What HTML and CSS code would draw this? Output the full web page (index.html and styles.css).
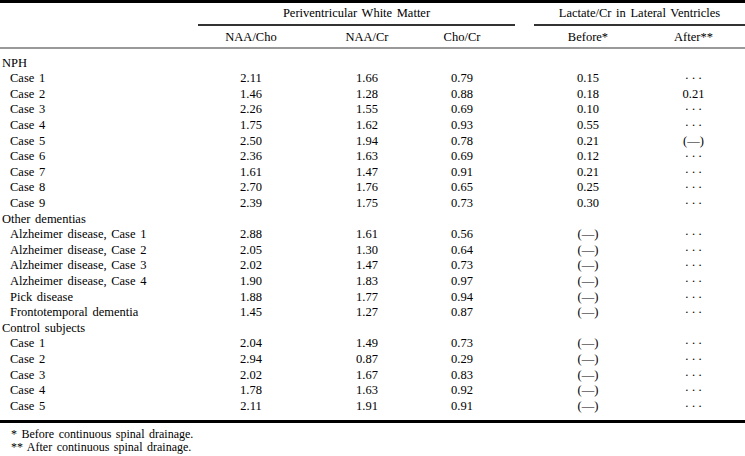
FILE: index.html
```html
<!DOCTYPE html>
<html>
<head>
<meta charset="utf-8">
<link rel="stylesheet" href="styles.css">
</head>
<body>
<div class="table">
  <div class="row group-head">
    <div class="c1"></div>
    <div class="grp grp-pv"><span class="grp-label">Periventricular White Matter</span></div>
    <div class="grp grp-lac"><span class="grp-label">Lactate/Cr in Lateral Ventricles</span></div>
  </div>
  <div class="row col-head">
    <div class="c1"></div>
    <div class="v c2">NAA/Cho</div>
    <div class="v c3">NAA/Cr</div>
    <div class="v c4">Cho/Cr</div>
    <div class="v c6">Before*</div>
    <div class="v c7">After**</div>
  </div>
  <div class="body">
    <div class="row"><div class="c1 sec">NPH</div></div>
    <div class="row"><div class="c1 sub">Case 1</div><div class="v c2">2.11</div><div class="v c3">1.66</div><div class="v c4">0.79</div><div class="v c6">0.15</div><div class="v c7 dots">···</div></div>
    <div class="row"><div class="c1 sub">Case 2</div><div class="v c2">1.46</div><div class="v c3">1.28</div><div class="v c4">0.88</div><div class="v c6">0.18</div><div class="v c7">0.21</div></div>
    <div class="row"><div class="c1 sub">Case 3</div><div class="v c2">2.26</div><div class="v c3">1.55</div><div class="v c4">0.69</div><div class="v c6">0.10</div><div class="v c7 dots">···</div></div>
    <div class="row"><div class="c1 sub">Case 4</div><div class="v c2">1.75</div><div class="v c3">1.62</div><div class="v c4">0.93</div><div class="v c6">0.55</div><div class="v c7 dots">···</div></div>
    <div class="row"><div class="c1 sub">Case 5</div><div class="v c2">2.50</div><div class="v c3">1.94</div><div class="v c4">0.78</div><div class="v c6">0.21</div><div class="v c7">(—)</div></div>
    <div class="row"><div class="c1 sub">Case 6</div><div class="v c2">2.36</div><div class="v c3">1.63</div><div class="v c4">0.69</div><div class="v c6">0.12</div><div class="v c7 dots">···</div></div>
    <div class="row"><div class="c1 sub">Case 7</div><div class="v c2">1.61</div><div class="v c3">1.47</div><div class="v c4">0.91</div><div class="v c6">0.21</div><div class="v c7 dots">···</div></div>
    <div class="row"><div class="c1 sub">Case 8</div><div class="v c2">2.70</div><div class="v c3">1.76</div><div class="v c4">0.65</div><div class="v c6">0.25</div><div class="v c7 dots">···</div></div>
    <div class="row"><div class="c1 sub">Case 9</div><div class="v c2">2.39</div><div class="v c3">1.75</div><div class="v c4">0.73</div><div class="v c6">0.30</div><div class="v c7 dots">···</div></div>
    <div class="row"><div class="c1 sec">Other dementias</div></div>
    <div class="row"><div class="c1 sub">Alzheimer disease, Case 1</div><div class="v c2">2.88</div><div class="v c3">1.61</div><div class="v c4">0.56</div><div class="v c6">(—)</div><div class="v c7 dots">···</div></div>
    <div class="row"><div class="c1 sub">Alzheimer disease, Case 2</div><div class="v c2">2.05</div><div class="v c3">1.30</div><div class="v c4">0.64</div><div class="v c6">(—)</div><div class="v c7 dots">···</div></div>
    <div class="row"><div class="c1 sub">Alzheimer disease, Case 3</div><div class="v c2">2.02</div><div class="v c3">1.47</div><div class="v c4">0.73</div><div class="v c6">(—)</div><div class="v c7 dots">···</div></div>
    <div class="row"><div class="c1 sub">Alzheimer disease, Case 4</div><div class="v c2">1.90</div><div class="v c3">1.83</div><div class="v c4">0.97</div><div class="v c6">(—)</div><div class="v c7 dots">···</div></div>
    <div class="row"><div class="c1 sub">Pick disease</div><div class="v c2">1.88</div><div class="v c3">1.77</div><div class="v c4">0.94</div><div class="v c6">(—)</div><div class="v c7 dots">···</div></div>
    <div class="row"><div class="c1 sub">Frontotemporal dementia</div><div class="v c2">1.45</div><div class="v c3">1.27</div><div class="v c4">0.87</div><div class="v c6">(—)</div><div class="v c7 dots">···</div></div>
    <div class="row"><div class="c1 sec">Control subjects</div></div>
    <div class="row"><div class="c1 sub">Case 1</div><div class="v c2">2.04</div><div class="v c3">1.49</div><div class="v c4">0.73</div><div class="v c6">(—)</div><div class="v c7 dots">···</div></div>
    <div class="row"><div class="c1 sub">Case 2</div><div class="v c2">2.94</div><div class="v c3">0.87</div><div class="v c4">0.29</div><div class="v c6">(—)</div><div class="v c7 dots">···</div></div>
    <div class="row"><div class="c1 sub">Case 3</div><div class="v c2">2.02</div><div class="v c3">1.67</div><div class="v c4">0.83</div><div class="v c6">(—)</div><div class="v c7 dots">···</div></div>
    <div class="row"><div class="c1 sub">Case 4</div><div class="v c2">1.78</div><div class="v c3">1.63</div><div class="v c4">0.92</div><div class="v c6">(—)</div><div class="v c7 dots">···</div></div>
    <div class="row"><div class="c1 sub">Case 5</div><div class="v c2">2.11</div><div class="v c3">1.91</div><div class="v c4">0.91</div><div class="v c6">(—)</div><div class="v c7 dots">···</div></div>
  </div>
</div>
<div class="notes">
  <p>* Before continuous spinal drainage.</p>
  <p>** After continuous spinal drainage.</p>
</div>
</body>
</html>
```
FILE: styles.css
```css
html, body {
  margin: 0;
  padding: 0;
  background: #fff;
}
body {
  width: 745px;
  height: 456px;
  overflow: hidden;
  font-family: "Liberation Serif", "Times New Roman", serif;
  font-size: 12.5px;
  color: #000;
  word-spacing: 1.5px;
}
.table {
  border-top: 3px solid #000;
  border-bottom: 3px solid #000;
}
.row {
  display: grid;
  grid-template-columns: 198px 106px 126px 64px 40px 108px 103px;
  height: 15.6px;
  line-height: 15.6px;
  white-space: nowrap;
}
.c1 { grid-column: 1; }
.c2 { grid-column: 2; }
.c3 { grid-column: 3; }
.c4 { grid-column: 4; }
.c6 { grid-column: 6; }
.c7 { grid-column: 7; }
.v { text-align: center; }
.sec { padding-left: 2px; }
.sub { padding-left: 10px; }
.dots { letter-spacing: 2.5px; text-indent: 2.5px; }

.group-head {
  height: auto;
  line-height: 16px;
  padding-top: 2px;
}
.grp { text-align: center; padding-bottom: 3px; border-bottom: 2px solid #333; }
.grp-pv { grid-column: 2 / 5; margin-right: -21px; }
.grp-lac { grid-column: 6 / 8; }
.col-head {
  height: auto;
  line-height: 16px;
  padding: 3px 0 2px;
  border-bottom: 2px solid #999;
}
.body {
  padding: 6.7px 0 5.5px;
}
.notes {
  padding: 5.5px 0 0 11px;
  font-size: 12px;
  line-height: 13px;
}
.notes p { margin: 0; }
```
